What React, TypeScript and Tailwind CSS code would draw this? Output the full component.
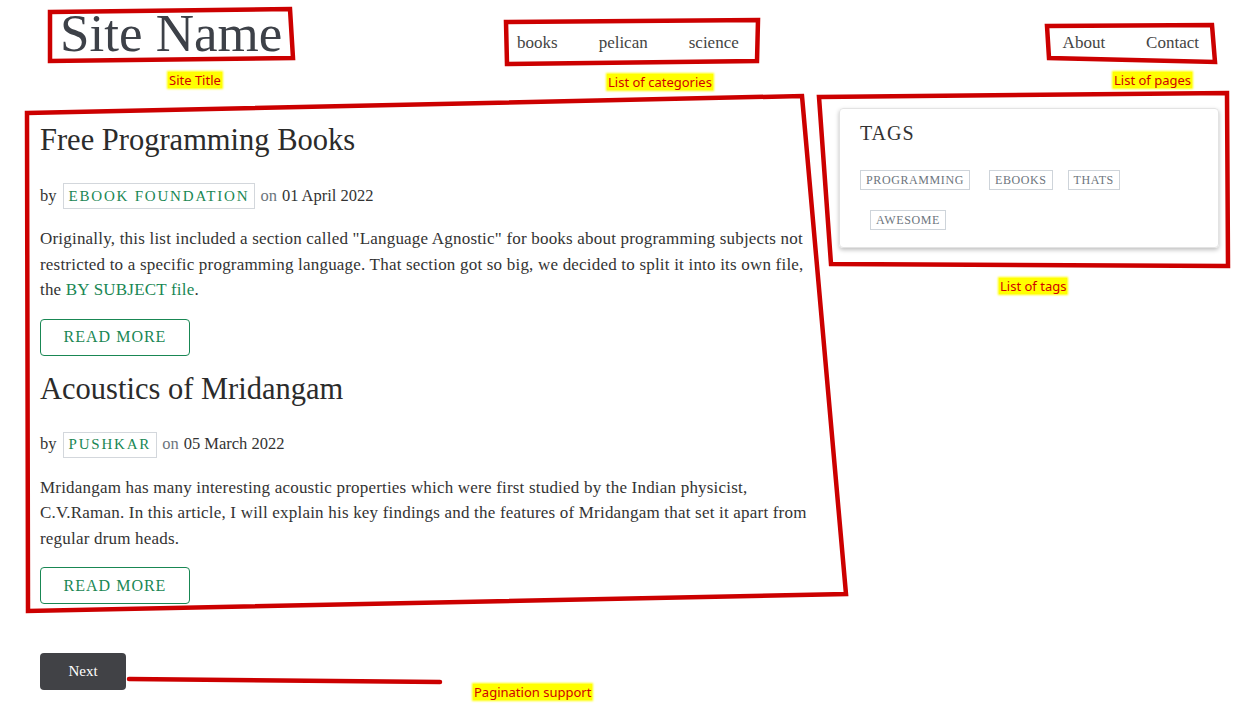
import React from "react";

const serif = "font-['Liberation_Serif',_'DejaVu_Serif',_serif]";

const CATEGORIES = ["books", "pelican", "science"];
const PAGES = ["About", "Contact"];
const TAGS = ["programming", "ebooks", "thats", "awesome"];

const POSTS = [
  {
    title: "Free Programming Books",
    author: "Ebook Foundation",
    date: "01 April 2022",
    body: (
      <>
        Originally, this list included a section called "Language Agnostic" for books about programming subjects not
        restricted to a specific programming language. That section got so big, we decided to split it into its own
        file, the <a className="text-[#198754]">BY SUBJECT file</a>.
      </>
    ),
  },
  {
    title: "Acoustics of Mridangam",
    author: "Pushkar",
    date: "05 March 2022",
    body: (
      <>
        Mridangam has many interesting acoustic properties which were first studied by the Indian physicist,
        C.V.Raman. In this article, I will explain his key findings and the features of Mridangam that set it apart
        from regular drum heads.
      </>
    ),
  },
];

function Label({ children, className }: { children: React.ReactNode; className: string }) {
  return (
    <span
      className={`absolute font-['Noto_Sans',_'DejaVu_Sans',_sans-serif] text-[13px] leading-[16px] text-[#d00000] bg-[#ffff00] px-[1px] shadow-[0_0_2px_1px_#ffff00] whitespace-nowrap ${className}`}
    >
      {children}
    </span>
  );
}

function PostCard({ post, first }: { post: (typeof POSTS)[number]; first: boolean }) {
  return (
    <article className={first ? "mt-[28px]" : "mt-[15px]"}>
      <h2 className="text-[30.5px] leading-[36px] text-[#2b2b2b]">{post.title}</h2>
      <div className="mt-[25px] flex items-center text-[16.5px] text-[#333]">
        <span>by</span>
        <span className="ml-[6px] h-[26px] flex items-center px-[5px] border border-[#d3d7dc] text-[#198754] uppercase tracking-[1.8px] text-[15px]">
          {post.author}
        </span>
        <span className="ml-[5px] text-[#6c757d]">on</span>
        <span className="ml-[5px]">{post.date}</span>
      </div>
      <p className="mt-[17px] text-[17px] leading-[25.5px] tracking-[0.2px] text-[#333]">{post.body}</p>
      <button className="mt-[16px] w-[150px] h-[37px] border border-[#198754] rounded-[4px] text-[#198754] uppercase tracking-[1px] text-[16px]">
        Read more
      </button>
    </article>
  );
}

export default function App() {
  return (
    <div className={`relative w-full min-h-[708px] bg-white ${serif}`}>
      {/* Header */}
      <header className="flex items-start h-[94px] pl-[60px] pr-[38px]">
        <div className="w-[457px] shrink-0 pt-[6px] text-[53px] leading-[54px] text-[#3d4148]">Site Name</div>
        <nav className="flex gap-[41px] pt-[31px] text-[17px] leading-[24px] text-[#444]">
          {CATEGORIES.map((c) => (
            <a key={c}>{c}</a>
          ))}
        </nav>
        <nav className="ml-auto flex gap-[41px] pt-[31px] text-[17px] leading-[24px] text-[#444]">
          {PAGES.map((p) => (
            <a key={p}>{p}</a>
          ))}
        </nav>
      </header>

      {/* Body */}
      <div className="flex items-start pl-[40px]">
        <main className="w-[772px] shrink-0">
          {POSTS.map((p, i) => (
            <PostCard key={p.title} post={p} first={i === 0} />
          ))}
          <button className="mt-[49px] w-[86px] h-[37px] rounded-[4px] bg-[#414246] text-white text-[15px]">
            Next
          </button>
        </main>

        <aside className="ml-[27px] mt-[14px] w-[380px] rounded-[4px] border border-[#e3e3e3] shadow-[0_2px_4px_rgba(0,0,0,0.25)] pl-[20px] pr-[12px] pt-[12px] pb-[17px]">
          <h3 className="text-[20px] leading-[24px] tracking-[1px] text-[#333] uppercase">Tags</h3>
          <div className="mt-[25px] flex flex-wrap text-[12px] leading-[18px] tracking-[0.6px] text-[#6c757d] uppercase">
            {TAGS.map((t, i) => (
              <span
                key={t}
                className={`border border-[#ced4da] px-[5px] mb-[20px] ${i === 0 ? "mr-[9px]" : "ml-[10px] mr-[5px]"} last:mb-0`}
              >
                {t}
              </span>
            ))}
          </div>
        </aside>
      </div>

      {/* Annotations */}
      <svg className="absolute inset-0 pointer-events-none" width="1237" height="708" viewBox="0 0 1237 708">
        <g fill="none" stroke="#cc0000" strokeWidth="4.5" strokeLinejoin="miter">
          <polygon points="50,12 290,9 293,58 50,61" />
          <polygon points="506,22 758,20 757,61 507,64" />
          <polygon points="1047,26 1212,25 1215,62 1049,58" />
          <polygon points="27,113 802,96 846,594 28,611" />
          <polygon points="819,97 1227,93 1228,266 831,264" />
          <line x1="129" y1="679" x2="440" y2="682" strokeLinecap="round" />
        </g>
      </svg>
      <Label className="left-[168px] top-[72px]">Site Title</Label>
      <Label className="left-[607px] top-[74px]">List of categories</Label>
      <Label className="left-[1113px] top-[72px]">List of pages</Label>
      <Label className="left-[999px] top-[278px]">List of tags</Label>
      <Label className="left-[473px] top-[684px]">Pagination support</Label>
    </div>
  );
}
